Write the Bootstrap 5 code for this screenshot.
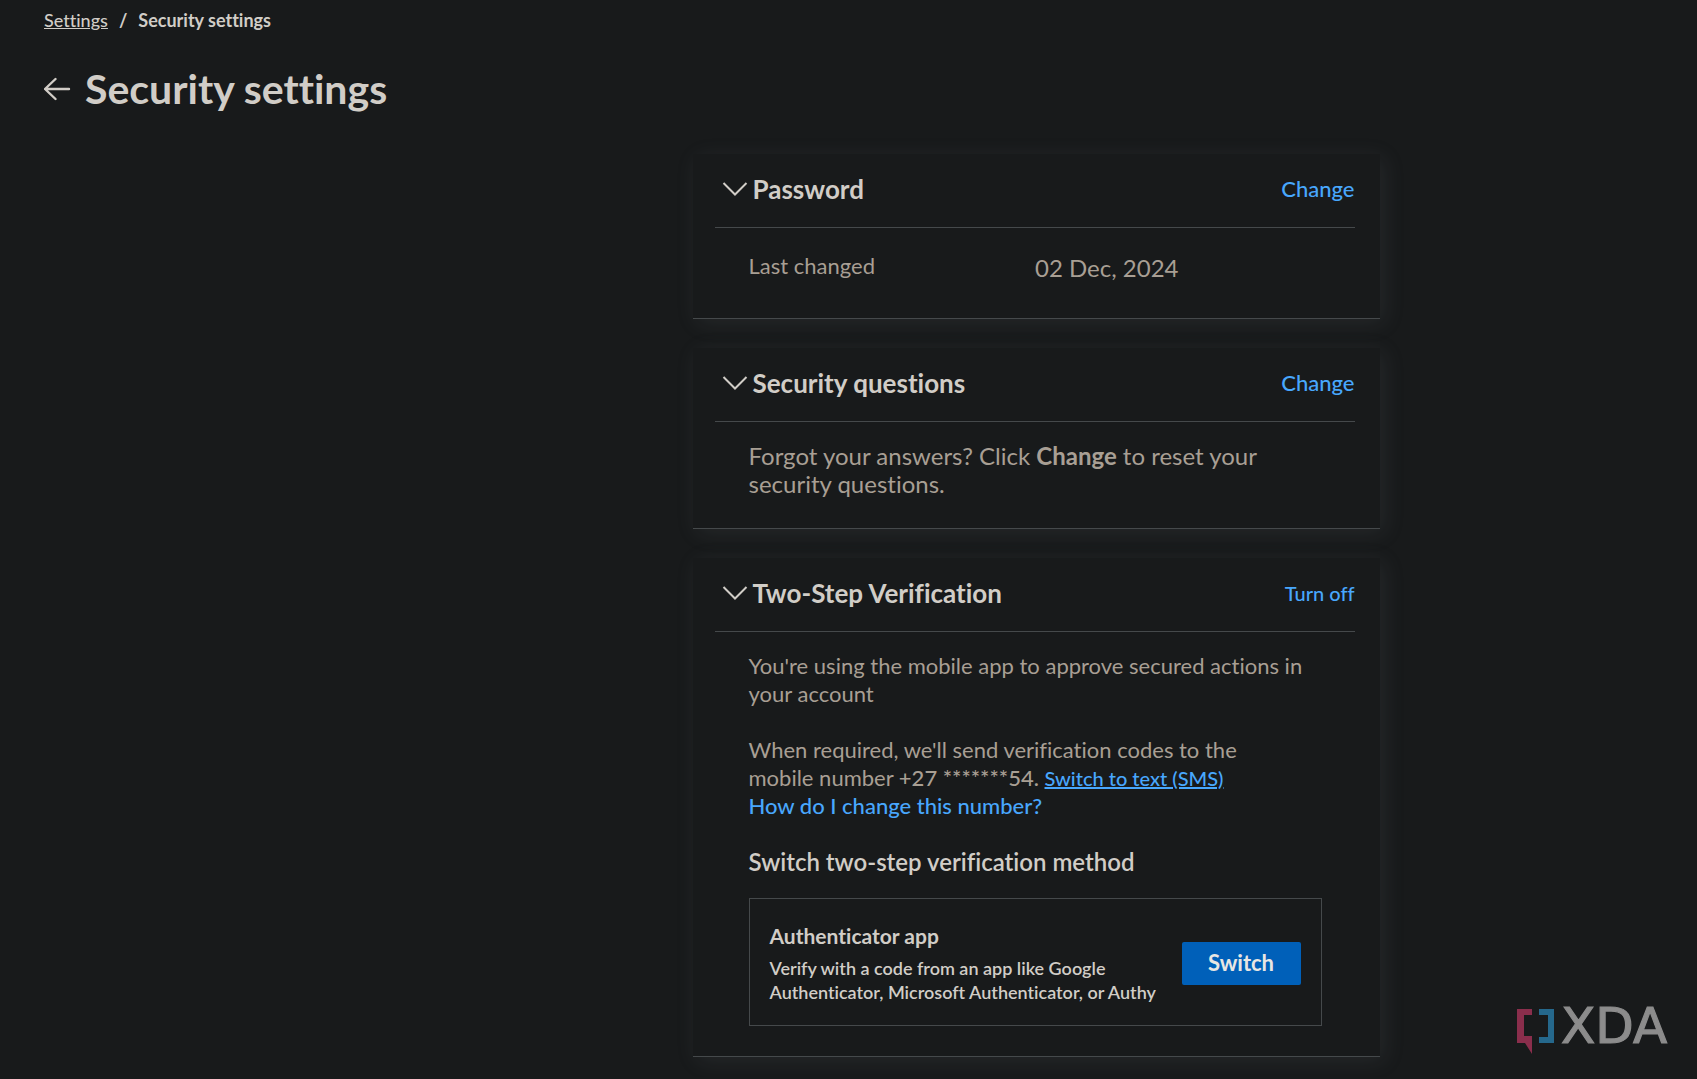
<!DOCTYPE html>
<html lang="en">
<head>
<meta charset="utf-8">
<meta name="viewport" content="width=device-width, initial-scale=1">
<title>Security settings</title>
<link href="https://cdn.jsdelivr.net/npm/bootstrap@5.3.0/dist/css/bootstrap.min.css" rel="stylesheet">
<style>
  body { background: #181a1b; color: #d1cdc7; font-family: Lato, "Open Sans", sans-serif; font-size: 22px; line-height: 28px; font-variant-ligatures: none; }
  a { color: #48a7fd; font-weight: 500; }
  .page-head { padding: 8px 44px 0; }
  .crumbs { font-size: 18px; line-height: 24px; font-weight: 700; --bs-breadcrumb-divider-color: #d1cdc7; --bs-breadcrumb-item-padding-x: 11px; }
  .crumbs a, .crumbs .breadcrumb-item { color: #d1cdc7; }
  .title-row { gap: 13px; padding: 33px 0 41px; }
  .page-title { font-size: 41px; line-height: 48px; font-weight: 700; }
  .settings-list { max-width: 687px; margin-left: calc(50% - 156px); gap: 29px; padding-bottom: 20px; }
  .panel { background: #181a1b; border-bottom: 1px solid #45494b; box-shadow: 4px 4px 20px rgba(120, 130, 134, .14); padding: 0 25px 0 22px; }
  .panel-top { height: 74px; border-bottom: 1px solid #45494b; padding: 0 0 4px 7px; gap: 5px; }
  .panel-top h2 { font-size: 26px; line-height: 32px; font-weight: 700; }
  .panel-body { padding: 20px 33px 30px 34px; color: #a89f94; }
  .panel-body.last-change { padding-top: 24px; padding-bottom: 34px; }
  .big-text { font-size: 24px; }
  .last-change .big-text { line-height: 32px; }
  .small-link { font-size: 20px; }
  .step-text { margin-bottom: 28px; }
  .method-title { font-size: 24px; line-height: 28px; font-weight: 600; color: #d1cdc7; margin: 28px 0 22px; }
  .method { border: 1px solid #45494b; color: #d1cdc7; padding: 23px 20px 21px; }
  .method h4 { font-size: 21px; line-height: 28px; font-weight: 700; margin-bottom: 6px; }
  .method p { font-size: 18px; line-height: 24px; font-weight: 600; }
  .btn-switch { --bs-btn-bg: #0060b9; --bs-btn-hover-bg: #0070d6; --bs-btn-color: #e8e6e3; --bs-btn-hover-color: #fff; width: 119px; height: 43px; border: 0; border-radius: 2px; font-size: 22px; line-height: 28px; font-weight: 700; flex: none; }
  .watermark { right: 20px; bottom: 22px; }
  .watermark svg { overflow: visible; }
</style>
</head>
<body>
<header class="page-head">
  <nav aria-label="breadcrumb">
    <ol class="breadcrumb crumbs mb-0">
      <li class="breadcrumb-item"><a href="#">Settings</a></li>
      <li class="breadcrumb-item active" aria-current="page">Security settings</li>
    </ol>
  </nav>
  <div class="d-flex align-items-center title-row">
    <a href="#" class="back-link d-flex" aria-label="Back">
      <svg width="28" height="26" viewBox="1 0 28 26" fill="none" stroke="#d1cdc7" stroke-width="2.4" stroke-linecap="round" stroke-linejoin="round"><path d="M2 13H26M12.500 3 2 13 12.500 23"/></svg>
    </a>
    <h1 class="page-title mb-0">Security settings</h1>
  </div>
</header>

<main class="settings-list d-flex flex-column">
  <section class="panel">
    <div class="panel-top d-flex align-items-center">
      <svg class="chev" width="26" height="16" viewBox="0 0 26 16" fill="none" stroke="#d1cdc7" stroke-width="2"><path d="M1.500 2 13 13.500 24.500 2"/></svg>
      <h2 class="mb-0">Password</h2>
      <a class="ms-auto text-decoration-none" href="#">Change</a>
    </div>
    <div class="panel-body last-change d-flex">
      <div class="w-50">Last changed</div>
      <div class="w-50 big-text">02 Dec, 2024</div>
    </div>
  </section>

  <section class="panel">
    <div class="panel-top d-flex align-items-center">
      <svg class="chev" width="26" height="16" viewBox="0 0 26 16" fill="none" stroke="#d1cdc7" stroke-width="2"><path d="M1.500 2 13 13.500 24.500 2"/></svg>
      <h2 class="mb-0">Security questions</h2>
      <a class="ms-auto text-decoration-none" href="#">Change</a>
    </div>
    <div class="panel-body">
      <p class="big-text mb-0">Forgot your answers? Click <strong>Change</strong> to reset your security questions.</p>
    </div>
  </section>

  <section class="panel">
    <div class="panel-top d-flex align-items-center">
      <svg class="chev" width="26" height="16" viewBox="0 0 26 16" fill="none" stroke="#d1cdc7" stroke-width="2"><path d="M1.500 2 13 13.500 24.500 2"/></svg>
      <h2 class="mb-0">Two-Step Verification</h2>
      <a class="ms-auto text-decoration-none small-link" href="#">Turn off</a>
    </div>
    <div class="panel-body">
      <p class="step-text">You're using the mobile app to approve secured actions in<br>your account</p>
      <p class="step-text">When required, we'll send verification codes to the<br>mobile number <span class="fw-medium">+27 *******54.</span> <a class="small-link" href="#">Switch to text (SMS)</a><br><a class="text-decoration-none" href="#">How do I change this number?</a></p>
      <h3 class="method-title">Switch two-step verification method</h3>
      <div class="method d-flex align-items-center justify-content-between">
        <div>
          <h4>Authenticator app</h4>
          <p class="mb-0">Verify with a code from an app like Google<br>Authenticator, Microsoft Authenticator, or Authy</p>
        </div>
        <button type="button" class="btn btn-switch">Switch</button>
      </div>
    </div>
  </section>
</main>

<div class="watermark position-fixed">
  <svg class="d-block" width="160" height="50" viewBox="0 0 160 50" role="img" aria-label="XDA">
    <path fill="#8a2e4c" d="M0 2H15V8H7V29H15V47L8 36H0Z"/>
    <path fill="#25688c" d="M22 2H37V36H22V30H31V8H22Z"/>
    <text x="44" y="36" font-family="DejaVu Sans, sans-serif" font-size="50" fill="#8c8c8c" stroke="#8c8c8c" stroke-width="1.2">XDA</text>
  </svg>
</div>
<script src="https://cdn.jsdelivr.net/npm/bootstrap@5.3.0/dist/js/bootstrap.bundle.min.js"></script>
</body>
</html>
